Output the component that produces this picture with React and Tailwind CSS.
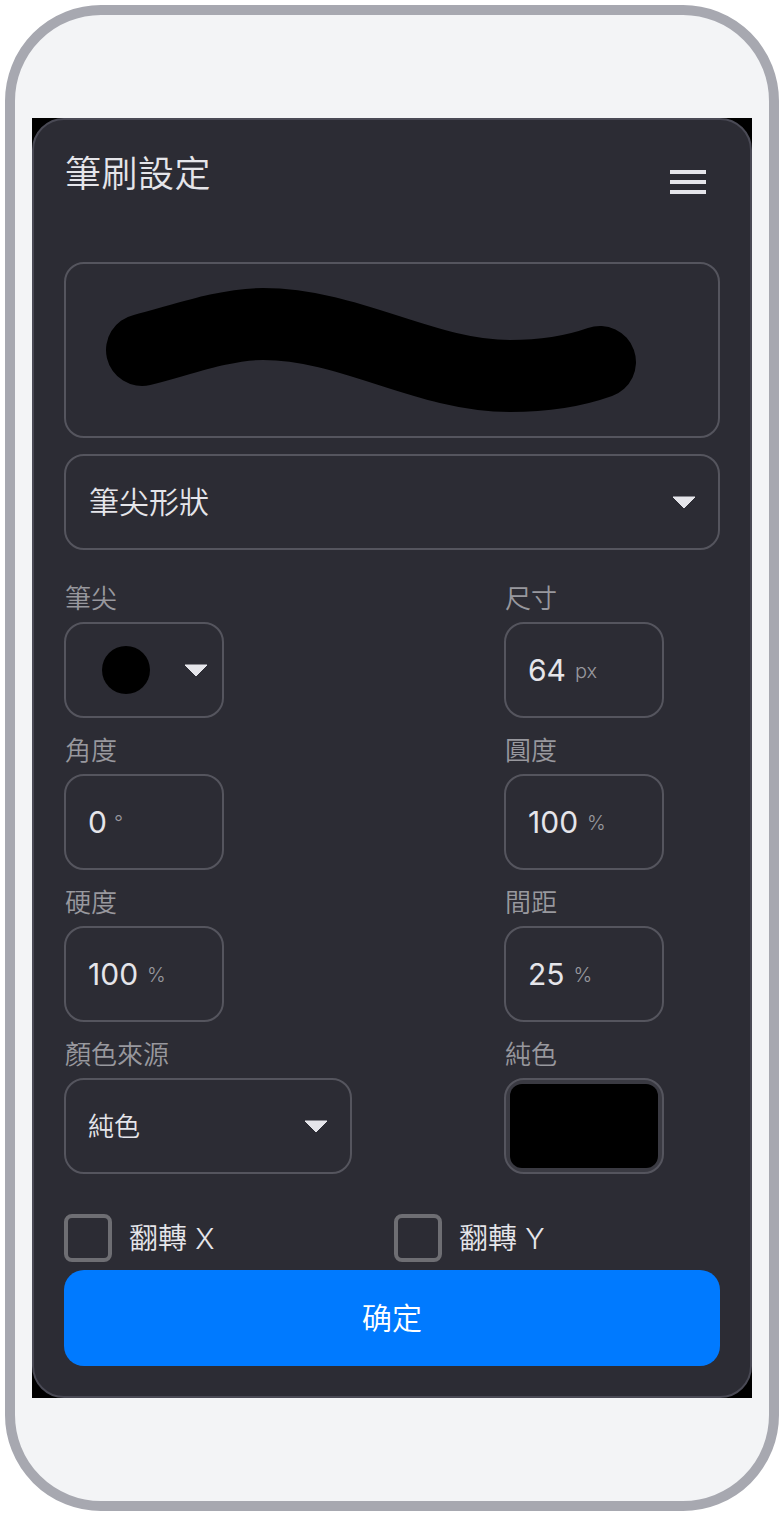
import React from "react";

const Caret = () => (
  <svg width="24" height="13" viewBox="0 0 24 13" className="shrink-0">
    <path d="M1 1 H23 L12 12 Z" fill="#e5e5ea" stroke="#e5e5ea" strokeWidth="1" strokeLinejoin="round" />
  </svg>
);

const Label = ({ children }) => (
  <div className="h-9 mb-1.5 pt-px pl-px text-[26px] leading-9 text-[#98989e]">{children}</div>
);

const NumberField = ({ label, value, unit, unitClass = "ml-[9px]" }) => (
  <div>
    <Label>{label}</Label>
    <div className="w-40 h-24 px-[22px] flex items-center border-2 border-[#55555e] rounded-[20px]">
      <span className="text-[30px] font-normal text-[#e5e5ea]">{value}</span>
      <span className={`${unitClass} pt-0.5 text-[20px] text-[#98989e]`}>{unit}</span>
    </div>
  </div>
);

const Check = ({ label }) => (
  <label className="w-[330px] shrink-0 flex items-center">
    <span className="w-12 h-12 border-4 border-[#6e6e73] rounded-lg shrink-0"></span>
    <span className="ml-[17px] pt-0.5 text-[29px] text-[#e5e5ea]">{label}</span>
  </label>
);

export default function App() {
  return (
    <div className="p-[5px] bg-white font-['Inter','Noto_Sans_CJK_TC',sans-serif] font-[350]">
      <div className="h-[1506px] border-[10px] border-[#a7a8b0] rounded-[96px] bg-[#f3f4f6] flex items-center justify-center">
        <div className="w-[720px] h-[1280px] bg-black">
          <div className="h-full border-2 border-[#4a4a55] rounded-[32px] bg-[#2c2c34] px-[30px] pt-[30px] flex flex-col">
            <div className="h-16 mb-12 flex items-start justify-between">
              <h1 className="pl-px text-[36px] leading-[48px] tracking-[0.5px] font-[350] text-[#e5e5ea]">筆刷設定</h1>
              <button className="w-16 h-16 flex flex-col items-center justify-center gap-1.5">
                <span className="w-9 h-1 bg-[#e5e5ea]"></span>
                <span className="w-9 h-1 bg-[#e5e5ea]"></span>
                <span className="w-9 h-1 bg-[#e5e5ea]"></span>
              </button>
            </div>

            <div className="h-[176px] border-2 border-[#55555e] rounded-[20px] overflow-hidden">
              <svg width="652" height="172" viewBox="66 264 652 172">
                <path
                  d="M142 350 C176 342 222 324 263 324 C350 324 425 376 510 376 C545 376 572 372 600 362"
                  fill="none"
                  stroke="#000"
                  strokeWidth="72"
                  strokeLinecap="round"
                />
              </svg>
            </div>

            <div className="mt-4 h-24 pl-[23px] pr-[22px] flex items-center justify-between border-2 border-[#55555e] rounded-[20px]">
              <span className="text-[30px] text-[#e5e5ea]">筆尖形狀</span>
              <Caret />
            </div>

            <div className="mt-[30px] grid grid-cols-[440px_1fr] gap-y-3.5">
              <div>
                <Label>筆尖</Label>
                <div className="w-40 h-24 pl-9 pr-[14px] flex items-center justify-between border-2 border-[#55555e] rounded-[20px]">
                  <span className="w-12 h-12 rounded-full bg-black"></span>
                  <Caret />
                </div>
              </div>
              <NumberField label="尺寸" value="64" unit="px" />
              <NumberField label="角度" value="0" unit="°" unitClass="ml-[7px]" />
              <NumberField label="圓度" value="100" unit="%" />
              <NumberField label="硬度" value="100" unit="%" />
              <NumberField label="間距" value="25" unit="%" />
              <div>
                <Label>顏色來源</Label>
                <div className="w-[288px] h-24 px-[22px] flex items-center justify-between border-2 border-[#55555e] rounded-[20px]">
                  <span className="text-[26px] text-[#e5e5ea]">純色</span>
                  <Caret />
                </div>
              </div>
              <div>
                <Label>純色</Label>
                <div className="w-40 h-24 p-1 border-2 border-[#55555e] rounded-[20px] bg-[#3a3a42]">
                  <div className="h-full rounded-[12px] bg-black"></div>
                </div>
              </div>
            </div>

            <div className="mt-10 flex">
              <Check label="翻轉 X" />
              <Check label="翻轉 Y" />
            </div>

            <button className="mt-2 h-24 rounded-[20px] bg-[#007aff] text-[30px] text-white">确定</button>
          </div>
        </div>
      </div>
    </div>
  );
}
